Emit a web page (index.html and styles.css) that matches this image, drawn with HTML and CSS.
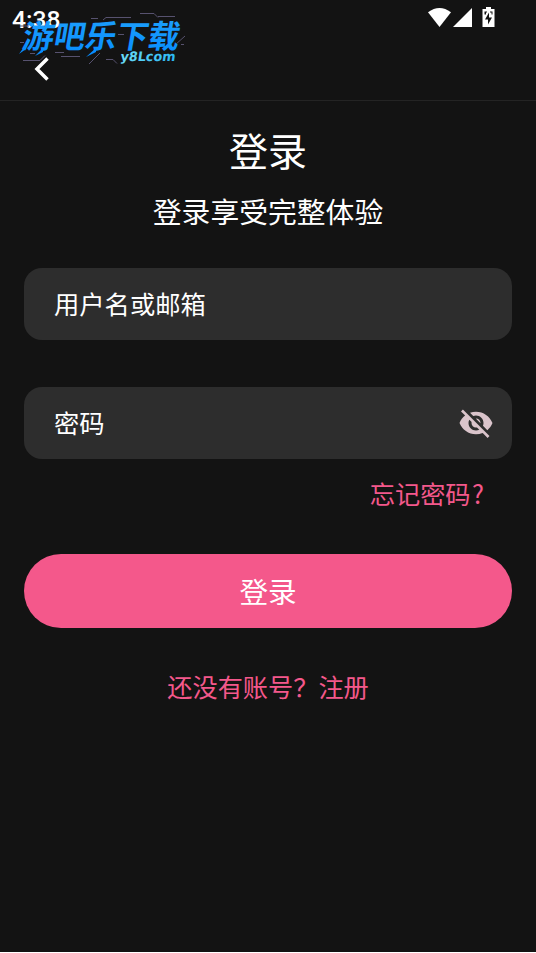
FILE: index.html
```html
<!DOCTYPE html>
<html lang="zh-CN">
<head>
<meta charset="utf-8">
<title>登录</title>
<link rel="stylesheet" href="styles.css">
</head>
<body>
<div class="screen">
  <header class="top">
    <div class="status">
      <span class="clock">4:38</span>
      <svg class="status-icons" width="68" height="22" viewBox="0 0 68 22" fill="#fff">
        <path d="M0 4.3Q11.5-4.2 23 4.3L11.5 19Z"/>
        <path d="M44 0V19H25Z"/>
        <path fill-rule="evenodd" d="M58-1h5v2h3.500v18h-12v-18h3.500zM56.500 3.500v3h1.500v-2h1v-1zM62 3.500v1h1.500v2h1v-3zM61 4.500l-4 7h3v5l4-7h-3z"/>
      </svg>
    </div>
    <svg class="back" width="20" height="26" viewBox="0 0 20 26" fill="none" stroke="#fff" stroke-width="3.500"><path d="M15.500 2.500L5 13l10.500 10.500"/></svg>
    <svg class="mark" width="200" height="80" viewBox="0 0 200 80">
      <defs>
        <linearGradient id="blue" x1="0" y1="0" x2="0" y2="1"><stop offset="0" stop-color="#20a2fb"/><stop offset="1" stop-color="#078cff"/></linearGradient>
        <linearGradient id="cyan" x1="0" y1="0" x2="1" y2="0"><stop offset="0" stop-color="#6bdcf6"/><stop offset="1" stop-color="#2bb7f4"/></linearGradient>
      </defs>
      <g fill="none" stroke="#57526f" stroke-width="1">
        <path d="M91 18.500h7M103 20l3-2.500h25M140 13.500h14l4 4M158 16.500h17M20 26h9M20 42.500h4M30 53.500h5M23 60.500h17l5-5M55 52.500h9M61 56.500h19M89 64l11-11M106 59.500h7l4 4M118 34.500h6M175 45l10-9M181 44.500h3"/>
      </g>
      <text class="mark-name" transform="translate(21 48) skewX(-10)" textLength="157" lengthAdjust="spacingAndGlyphs" fill="url(#blue)">游吧乐下载</text>
      <path d="M26 44L19 54l7-5zM43 48l-8 8 8-4zM96 48l-10 9 10-5z" fill="#078cff"/>
      <text class="mark-site" transform="translate(120 61) skewX(-8)" textLength="55" lengthAdjust="spacingAndGlyphs" fill="url(#cyan)">y8Lcom</text>
    </svg>
  </header>
  <main class="login">
    <h1 class="title">登录</h1>
    <p class="subtitle">登录享受完整体验</p>
    <div class="field"><span>用户名或邮箱</span></div>
    <div class="field password">
      <span>密码</span>
      <svg class="eye" width="36" height="36" viewBox="0 0 24 24" fill="#dac4cb"><path d="M12 7c2.760 0 5 2.240 5 5 0 .65-.13 1.260-.36 1.830l2.920 2.920c1.510-1.260 2.700-2.890 3.430-4.750-1.730-4.390-6-7.500-11-7.500-1.400 0-2.740.25-3.980.7l2.160 2.160C10.740 7.130 11.350 7 12 7zM2 4.270l2.280 2.280.46.46C3.080 8.300 1.780 10.020 1 12c1.730 4.390 6 7.500 11 7.500 1.550 0 3.030-.3 4.380-.84l.42.42L19.730 22 21 20.730 3.270 3 2 4.270zM7.530 9.800l1.550 1.550c-.05.21-.08.43-.08.65 0 1.660 1.340 3 3 3 .22 0 .44-.03.65-.08l1.550 1.550c-.67.33-1.410.53-2.200.53-2.760 0-5-2.240-5-5 0-.79.2-1.530.53-2.200zm4.310-.78l3.150 3.150.02-.16c0-1.660-1.340-3-3-3l-.17.01z"/></svg>
    </div>
    <a class="forgot">忘记密码<span class="mark-q">?</span></a>
    <div class="submit">登录</div>
    <a class="register">还没有账号？注册</a>
  </main>
</div>
</body>
</html>
```
FILE: styles.css
```css
* { box-sizing: border-box; }
body {
  margin: 0;
  background: #fff;
  color: #fff;
  font-family: "Noto Sans CJK SC", sans-serif;
}
.screen { height: 952px; background: #131313; }
.top {
  position: relative;
  height: 101px;
  border-bottom: 1px solid #242424;
}
.status {
  display: flex;
  justify-content: space-between;
  padding: 8px 40px 0 12px;
  height: 56px;
}
.clock { font: 500 24.700px/23px Roboto, sans-serif; }
.status-icons { overflow: visible; }
.back { display: block; margin-left: 32px; }
.mark { position: absolute; left: 0; top: 0; overflow: visible; }
.mark-name { font-size: 32px; font-weight: 700; }
.mark-site { font: bold 13px "DejaVu Sans", sans-serif; }
.login {
  display: flex;
  flex-direction: column;
  padding: 22px 24px 0;
}
.title {
  margin: 0;
  font-size: 39px;
  font-weight: 400;
  line-height: 52px;
  text-align: center;
}
.subtitle {
  margin: 15px 0 37px;
  font-size: 28.8px;
  line-height: 41px;
  text-align: center;
}
.field {
  display: flex;
  align-items: center;
  justify-content: space-between;
  height: 71.500px;
  padding: 0 18px 0 30px;
  border-radius: 18px;
  background: #2d2d2d;
  font-size: 25.3px;
}
.field span { margin-top: -2px; }
.password { margin-top: 47.500px; }
.forgot {
  align-self: flex-end;
  margin: 16px 28px 0 0;
  color: #f4588b;
  font-size: 25.2px;
  line-height: 36px;
}
.mark-q { margin-left: 1.500px; }
.submit {
  margin-top: 43px;
  height: 74px;
  border-radius: 37px;
  background: #f4588b;
  font-size: 28.6px;
  line-height: 74px;
  text-align: center;
}
.register {
  margin-top: 40px;
  color: #f4588b;
  font-size: 25.2px;
  line-height: 36px;
  text-align: center;
}
```
